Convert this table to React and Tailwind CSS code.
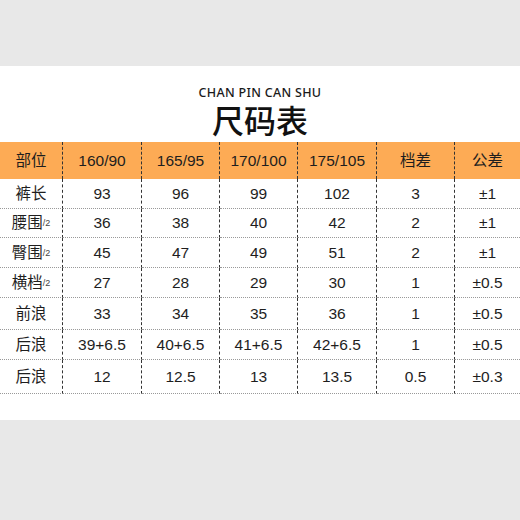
export default function App() {
  const cols = "grid-cols-[63px_79px_78px_78px_79px_78px_65px]";
  const header = ["部位", "160/90", "165/95", "170/100", "175/105", "档差", "公差"];
  const rows = [
    { h: "h-[30px]", label: "裤长", sub: false, v: ["93", "96", "99", "102", "3", "±1"] },
    { h: "h-[29px]", label: "腰围", sub: true, v: ["36", "38", "40", "42", "2", "±1"] },
    { h: "h-[30px]", label: "臀围", sub: true, v: ["45", "47", "49", "51", "2", "±1"] },
    { h: "h-[30px]", label: "横档", sub: true, v: ["27", "28", "29", "30", "1", "±0.5"] },
    { h: "h-[32px]", label: "前浪", sub: false, v: ["33", "34", "35", "36", "1", "±0.5"] },
    { h: "h-[30px]", label: "后浪", sub: false, v: ["39+6.5", "40+6.5", "41+6.5", "42+6.5", "1", "±0.5"] },
    { h: "h-[34px]", label: "后浪", sub: false, v: ["12", "12.5", "13", "13.5", "0.5", "±0.3"] },
  ];
  const font = "font-['Liberation_Sans','Noto_Sans_CJK_SC',sans-serif]";
  return (
    <div className={`w-[520px] h-[520px] bg-[#e8e8e8] flex flex-col ${font} text-[#1e1e1e]`}>
      <div className="h-[66px] bg-[#e8e8e8]" />
      <div className="h-[354px] bg-white flex flex-col">
        <div className="h-[76px] flex flex-col items-center">
          <div className="mt-[20px] text-[12.5px] leading-[13px] font-medium tracking-[0.3px] font-['Noto_Sans','Noto_Sans_CJK_SC',sans-serif] text-[#1a1a1a]">
            CHAN PIN CAN SHU
          </div>
          <div className="mt-[4px] text-[32px] leading-none font-medium font-['Noto_Sans_CJK_SC',sans-serif] text-[#111]">
            尺码表
          </div>
        </div>
        <div className={`grid ${cols} h-[37px] bg-[#fdab55] text-[15.5px]`}>
          {header.map((t, i) => (
            <div
              key={i}
              className={`flex items-center justify-center ${i < 6 ? "border-r border-dashed border-[#333]" : ""}`}
            >
              {t}
            </div>
          ))}
        </div>
        {rows.map((r, ri) => (
          <div key={ri} className={`grid ${cols} ${r.h} text-[15.5px]`}>
            <div className="flex items-center justify-center border-r border-b border-r-[#333] border-b-[#999] border-dashed [border-bottom-style:dotted]">
              <span>{r.label}</span>
              {r.sub && <span className="text-[9px] text-[#444] self-end mb-[7px]">/2</span>}
            </div>
            {r.v.map((v, i) => (
              <div
                key={i}
                className={`flex items-center justify-center border-b border-b-[#999] [border-bottom-style:dotted] ${
                  i < 5 ? "border-r border-r-[#333] [border-right-style:dashed]" : ""
                }`}
              >
                {v}
              </div>
            ))}
          </div>
        ))}
      </div>
      <div className="flex-1 bg-[#e8e8e8]" />
    </div>
  );
}
